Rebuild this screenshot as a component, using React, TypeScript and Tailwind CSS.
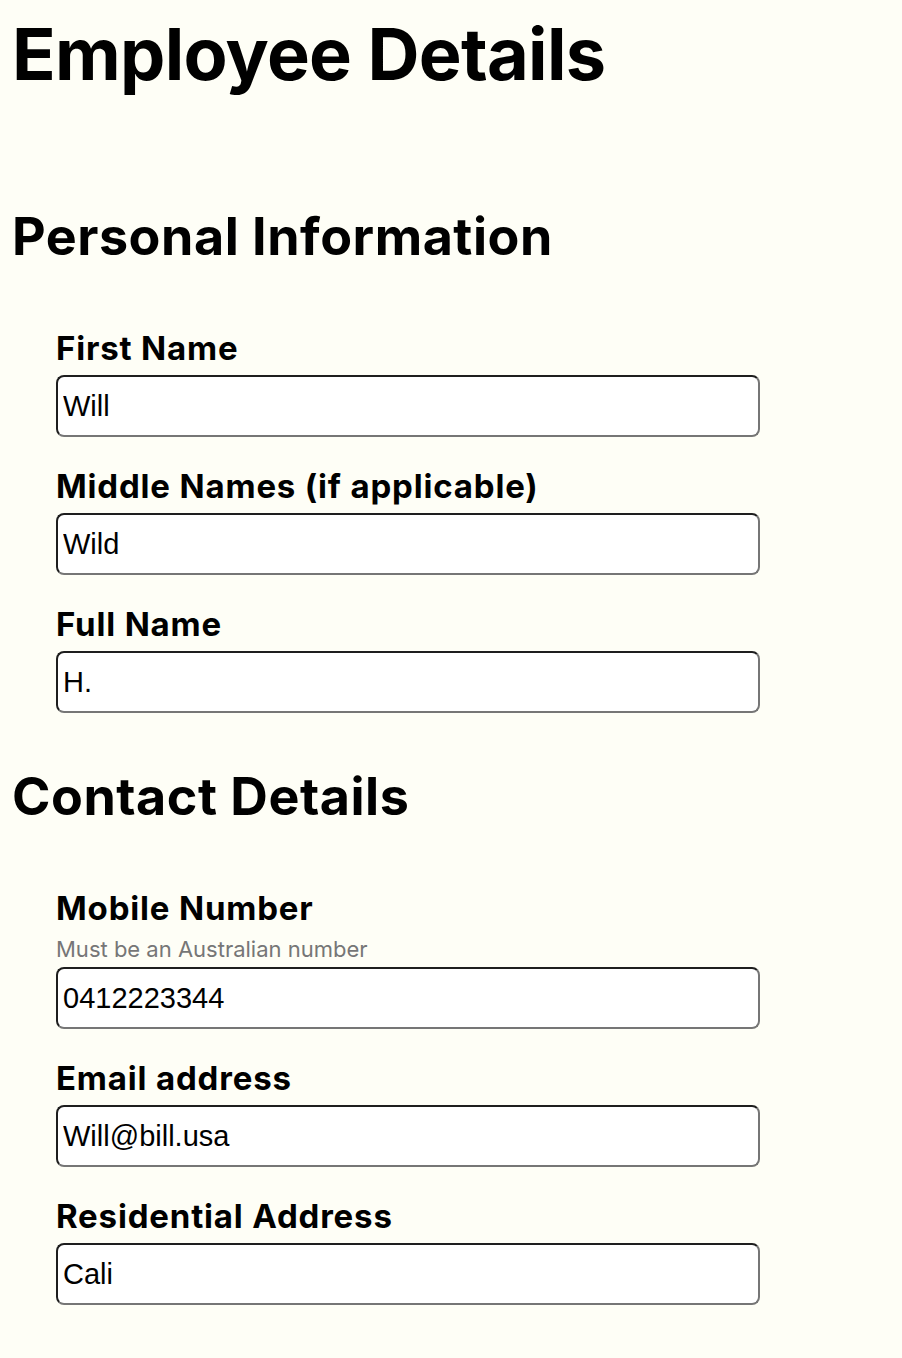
import React from "react";

type FieldProps = { label: string; value: string; hint?: string; first?: boolean };

function Field({ label, value, hint, first }: FieldProps) {
  return (
    <div className={first ? "mt-[70px]" : "mt-[33px]"}>
      <label className="block text-[33px] leading-[32px] font-bold tracking-[0.025em]">{label}</label>
      {hint ? (
        <div className="mt-[15px] text-[22px] leading-[20px] text-[#767676] font-normal">{hint}</div>
      ) : null}
      <input
        readOnly
        value={value}
        className={`${hint ? "mt-[8px]" : "mt-[11px]"} block w-[704px] h-[62px] bg-white rounded-[8px] border-2 border-t-[#1e1e1e] border-l-[#1e1e1e] border-r-[#767676] border-b-[#767676] pl-[5px] pr-[5px] text-[29px] text-black font-['Liberation_Sans',Arial,sans-serif] outline-none`}
      />
    </div>
  );
}

export default function App() {
  return (
    <div className="min-h-[1358px] bg-[#fefef6] text-black font-['Inter',sans-serif] pt-[18px] pl-[12px]">
      <h1 className="text-[72px] leading-[72px] font-bold tracking-[-0.01em]">Employee Details</h1>

      <h2 className="mt-[122px] text-[52px] leading-[50px] font-bold tracking-[0.01em]">Personal Information</h2>
      <div className="pl-[44px]">
        <Field first label="First Name" value="Will" />
        <Field label="Middle Names (if applicable)" value="Wild" />
        <Field label="Full Name" value="H." />
      </div>

      <h2 className="mt-[59px] text-[52px] leading-[50px] font-bold tracking-[0.01em]">Contact Details</h2>
      <div className="pl-[44px]">
        <Field first label="Mobile Number" hint="Must be an Australian number" value="0412223344" />
        <Field label="Email address" value="Will@bill.usa" />
        <Field label="Residential Address" value="Cali" />
      </div>
    </div>
  );
}
